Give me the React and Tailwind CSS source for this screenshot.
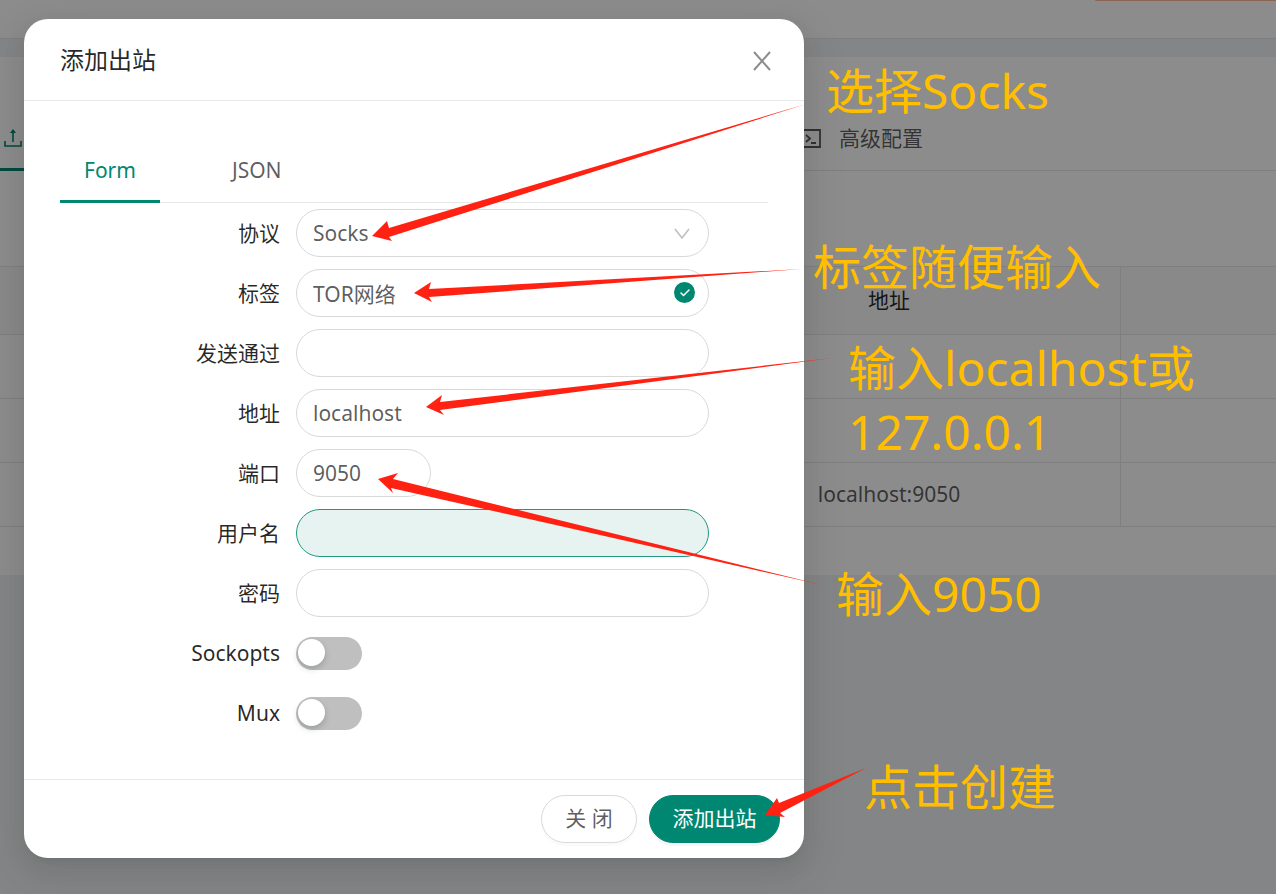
import { Check } from 'lucide-react';

const FONT = "font-['Noto_Sans','Noto_Sans_CJK_SC',sans-serif]";

const NOTE = 'absolute text-[48px] leading-16 whitespace-nowrap text-[#ffbf00]';

const notes = [
  { text: '选择Socks', place: 'left-[826px] top-[59px]' },
  { text: '标签随便输入', place: 'left-[813px] top-[235px]' },
  { text: '输入localhost或', place: 'left-[848px] top-[336px]' },
  { text: '127.0.0.1', place: 'left-[848px] top-[400px]' },
  { text: '输入9050', place: 'left-[836px] top-[562px]' },
  { text: '点击创建', place: 'left-[864px] top-[755px]' },
];

const arrows = [
  '372,236 387,221 389,228 806,104 389,237 392,241',
  '414,293 431,282 429,289 802,269 429,297 432,302',
  '426,407 442,395 440,402 832,358 440,410 444,415',
  '378,479 398,473 393,479 822,585 391,488 393,493',
  '765,815 777,798 779,803 866,768 780,813 785,817',
];

const outbounds = ['', '', 'localhost:9050'];

function UploadIcon() {
  return (
    <svg width="18" height="20" viewBox="0 0 18 20" fill="none" stroke="currentColor" strokeWidth="1.6">
      <path d="M1 13v5h16v-5M9 14V4" />
      <path d="M6 5l3-4 3 4z" fill="currentColor" stroke="none" />
    </svg>
  );
}

function CodeIcon() {
  return (
    <svg width="20" height="20" viewBox="0 0 20 20" fill="none" stroke="currentColor" strokeWidth="1.8">
      <path d="M1 1h18v17H1z" />
      <path d="M5 6l4 3.5L5 13M10 14h5" />
    </svg>
  );
}

function CloseIcon() {
  return (
    <svg width="18" height="20" viewBox="0 0 18 20" fill="none" stroke="currentColor" strokeWidth="2">
      <path d="M1 1l16 18M17 1L1 19" />
    </svg>
  );
}

function Page() {
  return (
    <div className="min-h-screen bg-[#f0f2f5]">
      <header className="flex h-[39px] justify-end border-b border-[#e6e6e6] bg-white">
        <div className="h-px w-[181px] rounded-bl-sm bg-[#ffbb96]" />
      </header>
      <main className="mt-[18px] bg-white pb-12">
        <nav className="grid h-[114px] grid-cols-[801px_1fr] border-b border-[#e6e6e6] pt-[50px] text-[21px]">
          <button className="-mb-px flex items-center border-b-3 border-[#008771] pl-1 text-[#008771]" aria-label="outbounds">
            <UploadIcon />
          </button>
          <button className="flex items-center gap-[18px] text-black/65">
            <CodeIcon />
            高级配置
          </button>
        </nav>
        <table className="mt-[95px] w-full table-fixed border-collapse text-[21px]">
          <colgroup>
            <col className="w-[658px]" />
            <col className="w-[462px]" />
            <col />
          </colgroup>
          <thead>
            <tr className="h-[68px] bg-[#fafafa] text-black/85">
              <th className="border-y border-[#e8e8e8]" />
              <th className="border border-[#e8e8e8] font-normal">地址</th>
              <th className="border-y border-[#e8e8e8]" />
            </tr>
          </thead>
          <tbody>
            {outbounds.map((address, i) => (
              <tr key={i} className="h-16 text-black/65">
                <td className="border-y border-[#e8e8e8]" />
                <td className="border border-[#e8e8e8] text-center">{address}</td>
                <td className="border-y border-[#e8e8e8]" />
              </tr>
            ))}
          </tbody>
        </table>
      </main>
    </div>
  );
}

function Row({ id, label, children }) {
  return (
    <div className="flex h-15 items-center">
      <label htmlFor={id} className="w-1/3 pt-0.5 pr-4 text-right text-black/85">{label}</label>
      <div className="relative w-7/12">{children}</div>
    </div>
  );
}

function TextField({ id, value = '', type = 'text', className = 'w-full border-[#d9d9d9] bg-white' }) {
  return (
    <input
      id={id}
      type={type}
      defaultValue={value}
      className={`block h-12 rounded-full border px-4 text-black/65 outline-none ${className}`}
    />
  );
}

function Switch({ id }) {
  return (
    <input
      id={id}
      type="checkbox"
      role="switch"
      className="block h-[33px] w-[66px] appearance-none rounded-full bg-[#bfbfbf] p-[2px] before:block before:size-[27px] before:rounded-full before:bg-white before:shadow-[0_3px_6px_rgba(0,35,11,0.2)] checked:bg-[#008771] checked:before:ml-auto"
    />
  );
}

function OutboundDialog() {
  return (
    <div role="dialog" aria-labelledby="dialog-title"
      className="w-[780px] max-w-full rounded-3xl bg-white text-[21px] shadow-[0_5px_9px_-6px_rgba(0,0,0,0.12),0_9px_24px_rgba(0,0,0,0.08),0_14px_42px_12px_rgba(0,0,0,0.05)]">
      <div className="flex items-center justify-between border-b border-[#e8e8e8] py-6 pr-[33px] pl-9">
        <h2 id="dialog-title" className="text-2xl leading-[33px] text-black/85">添加出站</h2>
        <button aria-label="close" className="pt-0.5 text-black/45"><CloseIcon /></button>
      </div>

      <div className="p-9">
        <div role="tablist" className="flex h-[66px] gap-12 border-b border-[#e8e8e8]">
          <button role="tab" aria-selected="true" className="-mb-px border-b-3 border-[#008771] px-6 pt-1 text-[#008771]">Form</button>
          <button role="tab" aria-selected="false" className="px-6 pt-0.5 text-black/65">JSON</button>
        </div>

        <form>
          <Row id="protocol" label="协议">
            <select id="protocol" className="block h-12 w-full appearance-none rounded-full border border-[#d9d9d9] bg-white px-4 pt-0.5 text-black/65 outline-none">
              <option>Socks</option>
            </select>
            <svg className="pointer-events-none absolute top-4 right-[18px]" width="18" height="16" viewBox="0 0 18 16" fill="none" stroke="#bfbfbf" strokeWidth="1.6">
              <path d="M2 4l7 9 7-9" />
            </svg>
          </Row>
          <Row id="tag" label="标签">
            <TextField id="tag" value="TOR网络" />
            <span className="absolute top-[13px] right-[14px] flex size-[21px] items-center justify-center rounded-full bg-[#008771] text-white">
              <Check size={12} strokeWidth={3} />
            </span>
          </Row>
          <Row id="send-through" label="发送通过"><TextField id="send-through" /></Row>
          <Row id="address" label="地址"><TextField id="address" value="localhost" /></Row>
          <Row id="port" label="端口">
            <TextField id="port" value="9050" className="w-[135px] border-[#d9d9d9] bg-white" />
          </Row>
          <Row id="username" label="用户名">
            <TextField id="username" className="w-full border-[#1f9980] bg-[#e6f3f1]" />
          </Row>
          <Row id="password" label="密码"><TextField id="password" type="password" /></Row>
          <Row id="sockopts" label="Sockopts"><Switch id="sockopts" /></Row>
          <Row id="mux" label="Mux"><Switch id="mux" /></Row>
        </form>
      </div>

      <div className="flex justify-end gap-3 border-t border-[#e8e8e8] px-6 py-[15px]">
        <button className="h-12 w-24 rounded-full border border-[#d9d9d9] text-black/65 shadow-[0_3px_0_rgba(0,0,0,0.02)]">关 闭</button>
        <button className="h-12 w-[131px] rounded-full border border-[#008771] bg-[#008771] text-white shadow-[0_3px_0_rgba(0,0,0,0.04)]">添加出站</button>
      </div>
    </div>
  );
}

export default function App() {
  return (
    <div className={`relative min-h-screen overflow-hidden ${FONT}`}>
      <Page />
      <div className="absolute inset-0 bg-black/45 pt-[19px] pl-6">
        <OutboundDialog />
      </div>

      {/* walkthrough notes over everything */}
      <div className="pointer-events-none absolute inset-0">
        <svg className="absolute top-0 left-0" width="900" height="860" fill="#ff2212">
          {arrows.map((points) => <polygon key={points} points={points} />)}
        </svg>
        {notes.map((n) => <p key={n.text} className={`${NOTE} ${n.place}`}>{n.text}</p>)}
      </div>
    </div>
  );
}
